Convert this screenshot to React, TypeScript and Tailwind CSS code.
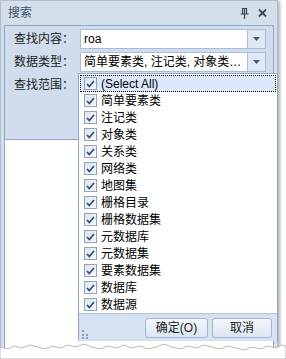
import React from 'react';

const items = [
  '(Select All)',
  '简单要素类',
  '注记类',
  '对象类',
  '关系类',
  '网络类',
  '地图集',
  '栅格目录',
  '栅格数据集',
  '元数据库',
  '元数据集',
  '要素数据集',
  '数据库',
  '数据源',
];

const font = "font-['Liberation_Sans','Noto_Sans_CJK_SC',sans-serif]";

function DropButton() {
  return (
    <div className="w-[18px] h-full border-l border-[#a9bcd6] bg-[#dfe8f4] flex items-center justify-center">
      <svg width="7" height="4" viewBox="0 0 7 4">
        <path d="M0 0h7L3.5 4z" fill="#4a5a70" />
      </svg>
    </div>
  );
}

function Field({ label, value }: { label: string; value: string }) {
  return (
    <div className="flex items-center h-[20px]">
      <div className="w-[66px] text-[12px] leading-none text-[#1b1b1b]">{label}</div>
      <div className="w-[186px] h-[20px] bg-white border border-[#a9bcd6] flex items-stretch">
        <div className="flex-1 pl-[3px] text-[12px] leading-[18px] text-black truncate">{value}</div>
        <DropButton />
      </div>
    </div>
  );
}

function Check() {
  return (
    <div className="w-[13px] h-[13px] border border-[#8ea4c4] bg-gradient-to-br from-[#dfe4ea] to-[#f7f8fa] flex items-center justify-center shrink-0">
      <svg width="9" height="8" viewBox="0 0 9 8">
        <path d="M1 4l2.3 2.5L8 1" stroke="#2d4f86" strokeWidth="1.8" fill="none" />
      </svg>
    </div>
  );
}

export default function App() {
  return (
    <div className={`w-[286px] h-[359px] bg-white relative overflow-hidden ${font}`}>
      <div className="w-[278px] h-[352px] bg-[#d5dfeb] border border-[#aebdd2] flex flex-col shadow-[2px_1px_3px_rgba(0,0,0,0.3)]">
        <div className="h-[24px] flex items-center px-[7px] shrink-0">
          <span className="text-[12px] leading-none text-[#3e5069]">搜索</span>
          <div className="ml-auto flex items-center gap-[9px] pr-[3px]">
            <svg width="9" height="11" viewBox="0 0 9 11">
              <path d="M2 0.5h5M2.5 0.5v5M6.5 0.5v5M4.5 0.5v5M0.5 6h8M4.5 6v5" stroke="#3a4658" strokeWidth="1.2" fill="none" />
            </svg>
            <svg width="9" height="8" viewBox="0 0 9 8">
              <path d="M1 0.5l7 7M8 0.5l-7 7" stroke="#3a4658" strokeWidth="1.8" fill="none" />
            </svg>
          </div>
        </div>
        <div className="flex-1 mx-[3px] border border-[#8ea6c7] bg-white flex flex-col">
          <div className="h-[114px] bg-[#d1ddee] border-b border-[#8ea6c7] pt-[3px] pl-[9px] flex flex-col gap-[3px]">
            <Field label="查找内容：" value="roa" />
            <Field label="数据类型：" value="简单要素类, 注记类, 对象类…" />
            <div className="h-[20px] flex items-center text-[12px] leading-none text-[#1b1b1b]">查找范围：</div>
          </div>
        </div>
      </div>

      <div className="absolute left-[78px] top-[73px] w-[200px] h-[268px] bg-white border border-[#8ea6c7] flex flex-col">
        <div className="flex-1 pt-[1px] px-[1px]">
          {items.map((it, i) => (
            <div
              key={it}
              className={`h-[17px] flex items-center gap-[4px] pl-[3px] text-[12px] leading-none text-black ${
                i === 0 ? 'bg-[#dce8fb] border border-dotted border-black' : 'border border-transparent'
              }`}
            >
              <Check />
              <span>{it}</span>
            </div>
          ))}
        </div>
        <div className="h-[28px] bg-[#d6e2f2] border-t border-[#b3c4da] flex items-center px-[2px] shrink-0">
          <svg width="10" height="12" viewBox="0 0 10 12" className="self-end mb-[2px]">
            <g fill="#8aa0bf">
              <rect x="1" y="3" width="2" height="2" />
              <rect x="1" y="7" width="2" height="2" />
              <rect x="5" y="7" width="2" height="2" />
              <rect x="1" y="10" width="2" height="2" />
              <rect x="5" y="10" width="2" height="2" />
            </g>
          </svg>
          <div className="ml-auto flex gap-[4px] pr-[3px]">
            <div className="w-[63px] h-[20px] rounded-[3px] border border-[#a3b6d1] bg-gradient-to-b from-[#f3f7fc] to-[#dbe5f2] flex items-center justify-center text-[12px] leading-none text-[#1b1b1b]">
              确定(O)
            </div>
            <div className="w-[60px] h-[20px] rounded-[3px] border border-[#a3b6d1] bg-gradient-to-b from-[#f3f7fc] to-[#dbe5f2] flex items-center justify-center text-[12px] leading-none text-[#1b1b1b]">
              取消
            </div>
          </div>
        </div>
      </div>

      <svg className="absolute left-0 bottom-0" width="286" height="22" viewBox="0 0 286 22">
        <path
          d="M0 10 L8 12 L14 9 L22 11 L30 8 L38 10 L45 12 L52 9 L60 11 L68 8 L76 10 L84 7 L92 10 L100 12 L108 9 L116 11 L124 8 L132 11 L140 9 L148 12 L156 10 L164 7 L172 10 L180 12 L188 9 L196 11 L204 8 L212 10 L220 12 L228 9 L236 11 L244 13 L252 10 L260 12 L268 9 L276 11 L282 8 L286 9 L286 22 L0 22 Z"
          fill="white"
          stroke="#b9b9b9"
          strokeWidth="1"
        />
      </svg>
    </div>
  );
}
